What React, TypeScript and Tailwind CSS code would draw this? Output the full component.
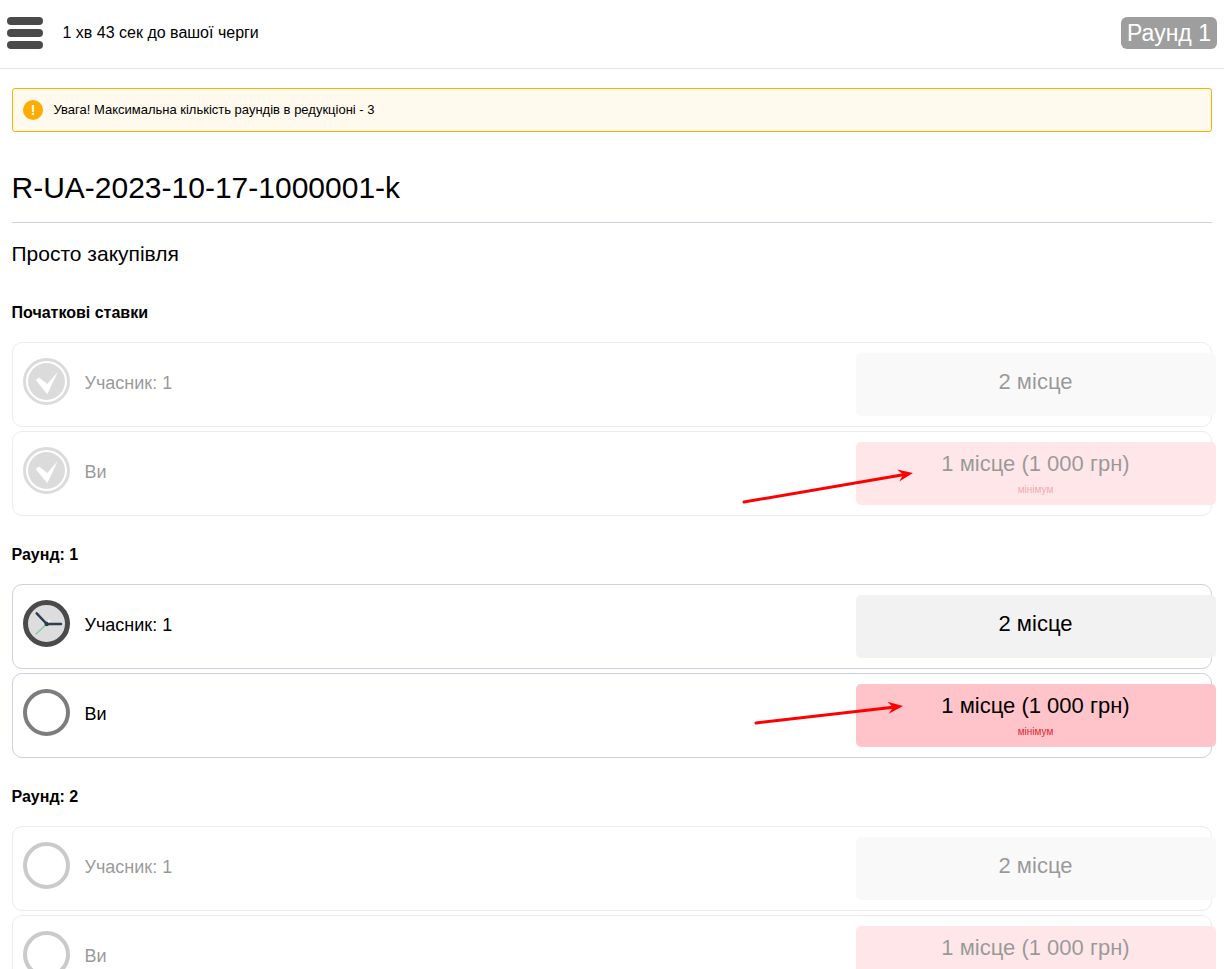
const CheckIcon = () => (
  <svg width="47" height="47" viewBox="0 0 47 47" className="shrink-0">
    <circle cx="23.5" cy="23.5" r="22" fill="none" stroke="#a8a8a8" strokeWidth="3" />
    <circle cx="23.5" cy="23.5" r="18.5" fill="#a8a8a8" />
    <path d="M12.7 22 L16 19.5 L24.3 26 L34.7 14 L24.3 36.3 Z" fill="#fff" />
  </svg>
)

const ClockIcon = () => (
  <svg width="47" height="47" viewBox="0 0 47 47" className="shrink-0">
    <circle cx="23.5" cy="23.5" r="21" fill="#dddddd" stroke="#4a4a4a" strokeWidth="5" />
    <path d="M23.7 24 L13.7 13.3" stroke="#2c3e50" strokeWidth="2.5" strokeLinecap="round" />
    <path d="M23.7 24 L38 24" stroke="#2c3e50" strokeWidth="2.5" strokeLinecap="round" />
    <path d="M23.7 24 L12.7 34.3" stroke="#7fcfa8" strokeWidth="1.5" />
    <path d="M23.7 24 L27 20" stroke="#ffffff" strokeWidth="1.5" />
    <circle cx="23.7" cy="24" r="2.2" fill="#2c3e50" />
  </svg>
)

const RingIcon = () => (
  <svg width="47" height="47" viewBox="0 0 47 47" className="shrink-0">
    <circle cx="23.5" cy="23.5" r="21.5" fill="none" stroke="#7d7d7d" strokeWidth="4" />
  </svg>
)

// red arrows sit over the rows, they are not dimmed with them
const Arrow = ({ w, h, className }: { w: number; h: number; className: string }) => {
  const len = Math.sqrt(w * w + h * h)
  const ux = w / len
  const uy = -h / len
  const tipX = w + 2
  const tipY = 4
  const backX = tipX - ux * 15
  const backY = tipY - uy * 15
  const neckX = tipX - ux * 10
  const neckY = tipY - uy * 10
  return (
    <svg width={w + 4} height={h + 8} className={className}>
      <line x1="2" y1={h + 4} x2={neckX} y2={neckY} stroke="#ff0000" strokeWidth="3" strokeLinecap="round" />
      <path
        d={`M${tipX} ${tipY} L${backX + uy * 6} ${backY - ux * 6} L${neckX} ${neckY} L${backX - uy * 6} ${backY + ux * 6} Z`}
        fill="#ff0000"
      />
    </svg>
  )
}

type RowProps = {
  icon: React.ReactNode
  name: string
  first?: boolean
  dim?: boolean
  arrow?: React.ReactNode
}

const Row = ({ icon, name, first, dim, arrow }: RowProps) => (
  <div className="relative">
    <div className={`flex h-[85px] items-center justify-between rounded-[10px] border border-[#cfcfdc] bg-white pl-[10px] ${dim ? "opacity-40" : ""}`}>
      <div className="flex items-center gap-[14.5px] pb-[6px] text-[18px] text-black">
        {icon}
        <span className="mt-1">{name}</span>
      </div>
      <div className={`-mr-[5px] flex h-[63px] w-[360px] flex-col items-center rounded-[5px] pr-px ${first ? "bg-[#ffc4ca] pt-[9px]" : "bg-[#f2f2f2] pt-4"}`}>
        <div className="text-[22px] leading-[25px] text-black">{first ? "1 місце (1 000 грн)" : "2 місце"}</div>
        {first && <div className="mt-2 text-[10px] leading-[12px] text-[#e5262e]">мінімум</div>}
      </div>
    </div>
    {arrow}
  </div>
)

const Group = ({ title, top, children }: { title: string; top: string; children: React.ReactNode }) => (
  <section className={top}>
    <h3 className="-ml-[0.5px] text-[16px] leading-[18px] font-bold text-black">{title}</h3>
    <div className="mt-5 flex flex-col gap-1">{children}</div>
  </section>
)

export default function App() {
  return (
    <div className="h-screen overflow-hidden bg-white font-['Liberation_Sans',Arial,sans-serif] text-black">
      <header className="flex h-[69px] items-start justify-between border-b border-[#e3e3e3] pt-[17px] pr-[7px] pl-[7px]">
        <div className="flex items-center gap-5">
          <div className="flex w-9 flex-col gap-1">
            <div className="h-2 rounded-full bg-[#4a4a4a]" />
            <div className="h-2 rounded-full bg-[#4a4a4a]" />
            <div className="h-2 rounded-full bg-[#4a4a4a]" />
          </div>
          <span className="-ml-[0.5px] text-[16px]">1 хв 43 сек до вашої черги</span>
        </div>
        <div className="flex h-8 w-24 items-center justify-center rounded-[6px] bg-[#9e9e9e] text-[23px] text-white">Раунд 1</div>
      </header>

      <main className="px-3">
        <div className="mt-[19px] flex h-11 items-center gap-[10.5px] rounded-[3px] border border-[#f9b000] bg-[#fff9ee] pl-[10px] text-[13px]">
          <div className="flex h-5 w-5 items-center justify-center rounded-full bg-[#ffab00] text-[14px] font-bold text-white">!</div>
          <span>Увага! Максимальна кількість раундів в редукціоні - 3</span>
        </div>

        <h1 className="mt-[38px] border-b border-[#cfcfdc] pb-[16px] text-[30px] leading-[36px]">
          <span className="-ml-[0.5px] block">R-UA-2023-10-17-1000001-k</span>
        </h1>
        <h2 className="mt-[19px] -ml-[0.5px] text-[21px] leading-[23px]">Просто закупівля</h2>

        <Group title="Початкові ставки" top="mt-[39px]">
          <Row dim icon={<CheckIcon />} name="Учасник: 1" />
          <Row
            dim
            first
            icon={<CheckIcon />}
            name="Ви"
            arrow={<Arrow w={169} h={29} className="absolute top-[38px] left-[730px]" />}
          />
        </Group>

        <Group title="Раунд: 1" top="mt-[30px]">
          <Row icon={<ClockIcon />} name="Учасник: 1" />
          <Row
            first
            icon={<RingIcon />}
            name="Ви"
            arrow={<Arrow w={147} h={17} className="absolute top-[29px] left-[742px]" />}
          />
        </Group>

        <Group title="Раунд: 2" top="mt-[30px]">
          <Row dim icon={<RingIcon />} name="Учасник: 1" />
          <Row dim first icon={<RingIcon />} name="Ви" />
        </Group>
      </main>
    </div>
  )
}
